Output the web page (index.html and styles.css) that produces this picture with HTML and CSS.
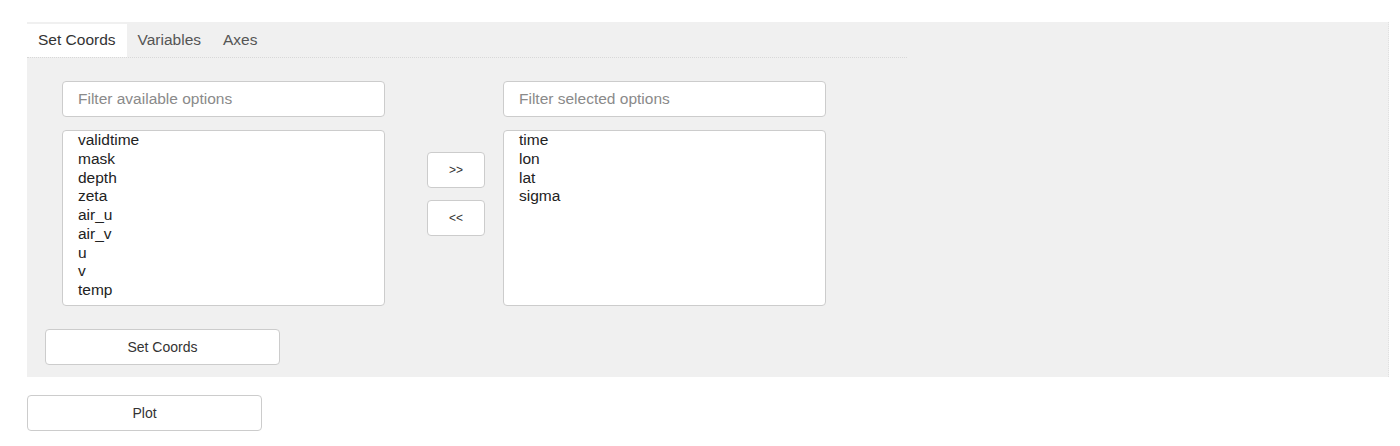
FILE: index.html
```html
<!DOCTYPE html>
<html>
<head>
<meta charset="utf-8">
<link rel="stylesheet" href="styles.css">
</head>
<body>
<div class="panel">
  <div class="tabs">
    <div class="tab active">Set Coords</div>
    <div class="tab">Variables</div>
    <div class="tab">Axes</div>
  </div>
  <div class="chooser">
    <div class="col">
      <input class="filter" type="text" placeholder="Filter available options">
      <div class="list">
        <div>validtime</div>
        <div>mask</div>
        <div>depth</div>
        <div>zeta</div>
        <div>air_u</div>
        <div>air_v</div>
        <div>u</div>
        <div>v</div>
        <div>temp</div>
      </div>
    </div>
    <div class="moves">
      <button class="move">&gt;&gt;</button>
      <button class="move">&lt;&lt;</button>
    </div>
    <div class="col">
      <input class="filter" type="text" placeholder="Filter selected options">
      <div class="list">
        <div>time</div>
        <div>lon</div>
        <div>lat</div>
        <div>sigma</div>
      </div>
    </div>
  </div>
  <button class="btn set">Set Coords</button>
</div>
<button class="btn plot">Plot</button>
</body>
</html>
```
FILE: styles.css
```css
html, body {
  margin: 0;
  background: #ffffff;
}
body {
  padding: 22px 0 0 27px;
  font-family: "Liberation Sans", Arial, sans-serif;
  color: #222;
}
.panel {
  width: 1362px;
  height: 355px;
  box-sizing: border-box;
  background: #f0f0f0;
  border-right: 1px dotted #e0e0e0;
  padding-top: 2px;
  display: flex;
  flex-direction: column;
}
.tabs {
  display: flex;
  width: 880px;
  height: 34px;
  box-sizing: border-box;
  border-bottom: 1px dotted #d8d8d8;
}
.tab {
  padding: 0 11px 0 11px;
  height: 33px;
  line-height: 31px;
  font-size: 15.5px;
  color: #555;
}
.tab.active {
  background: #ffffff;
  color: #333;
}
.chooser {
  display: flex;
  margin: 23px 0 0 35px;
}
.col {
  width: 323px;
  display: flex;
  flex-direction: column;
}
.filter {
  box-sizing: border-box;
  width: 323px;
  height: 36px;
  margin: 0;
  border: 1px solid #cccccc;
  border-radius: 4px;
  background: #fff;
  padding: 0 15px;
  font-family: "Liberation Sans", Arial, sans-serif;
  font-size: 15.5px;
  color: #333;
  outline: none;
}
.filter::placeholder {
  color: #8a8a8a;
}
.list {
  box-sizing: border-box;
  margin-top: 13px;
  height: 176px;
  border: 1px solid #cccccc;
  border-radius: 4px;
  background: #fff;
  padding: 0 15px;
  font-size: 15.5px;
  line-height: 18.75px;
  color: #222;
}
.moves {
  width: 58px;
  margin: 71px 18px 0 42px;
  display: flex;
  flex-direction: column;
  gap: 12px;
}
.move {
  width: 58px;
  height: 36px;
  background: #fff;
  border: 1px solid #cccccc;
  border-radius: 4px;
  font-family: "Liberation Sans", Arial, sans-serif;
  font-size: 12px;
  color: #333;
  padding: 0;
}
.btn {
  display: block;
  width: 235px;
  height: 36px;
  background: #fff;
  border: 1px solid #cccccc;
  border-radius: 4px;
  font-family: "Liberation Sans", Arial, sans-serif;
  font-size: 14px;
  color: #333;
  padding: 0;
}
.set {
  margin: 23px 0 0 18px;
}
.plot {
  margin-top: 18px;
}
```
